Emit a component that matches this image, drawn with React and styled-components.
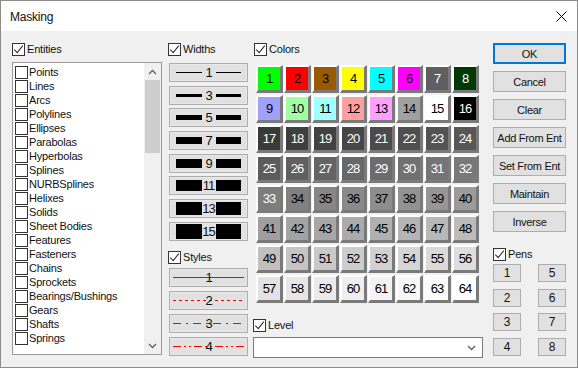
import React from "react";
import styled, { createGlobalStyle } from "styled-components";

const entities = [
	"Points", "Lines", "Arcs", "Polylines", "Ellipses", "Parabolas", "Hyperbolas",
	"Splines", "NURBSplines", "Helixes", "Solids", "Sheet Bodies", "Features",
	"Fasteners", "Chains", "Sprockets", "Bearings/Bushings", "Gears", "Shafts", "Springs",
];

const widths = [1, 3, 5, 7, 9, 11, 13, 15];

const styles = [
	{ n: 1, dash: "none" },
	{ n: 2, dash: "3 3" },
	{ n: 3, dash: "8 5 2 5" },
	{ n: 4, dash: "8 3 2 3 2 3" },
];

const topColors = [
	["#00ff00", "#000"], ["#ff0000", "#000"], ["#9c5a00", "#000"], ["#ffff00", "#000"],
	["#00ffff", "#000"], ["#ff00ff", "#000"], ["#5f5f5f", "#fff"], ["#003a00", "#fff"],
	["#a0a0ff", "#000"], ["#a0ffa0", "#000"], ["#a0ffff", "#000"], ["#ffa0a0", "#000"],
	["#ffa0ff", "#000"], ["#a0a0a0", "#000"], ["#ffffff", "#000"], ["#000000", "#fff"],
];

function cellColor(n) {
	if (n <= 16) return topColors[n - 1];
	const v = Math.min(255, Math.round(58 + (n - 17) * 4.2));
	const hex = v.toString(16).padStart(2, "0");
	return [`#${hex}${hex}${hex}`, n <= 33 ? "#fff" : "#000"];
}

const actions = ["OK", "Cancel", "Clear", "Add From Ent", "Set From Ent", "Maintain", "Inverse"];
const pens = [1, 5, 2, 6, 3, 7, 4, 8];

function CheckBox({ checked }) {
	return (
		<Box>
			{checked && (
				<svg width="11" height="11" viewBox="0 0 11 11">
					<path d="M1.3 5.6 L4.2 8.6 L9.8 1.6" fill="none" stroke="#333" strokeWidth="1.1" />
				</svg>
			)}
		</Box>
	);
}

function Chevron({ up }) {
	return (
		<svg width="9" height="6" viewBox="0 0 9 6">
			<path
				d={up ? "M1 5 L4.5 1.5 L8 5" : "M1 1 L4.5 4.5 L8 1"}
				fill="none"
				stroke="#606060"
				strokeWidth="1.3"
			/>
		</svg>
	);
}

function App() {
	return (
		<>
			<GlobalStyle />
			<Window>
				<TitleBar>
					<Title>Masking</Title>
					<svg width="11" height="11" viewBox="0 0 11 11">
						<path d="M0.5 0.5 L10.5 10.5 M10.5 0.5 L0.5 10.5" stroke="#000" strokeWidth="1" />
					</svg>
				</TitleBar>
				<Body>
					<Column $width={150}>
						<Header>
							<CheckBox checked />
							<span>Entities</span>
						</Header>
						<ListBox>
							<Items>
								{entities.map((e) => (
									<Item key={e}>
										<CheckBox />
										<span>{e}</span>
									</Item>
								))}
							</Items>
							<ScrollBar>
								<ArrowBox>
									<Chevron up />
								</ArrowBox>
								<Track>
									<Thumb />
								</Track>
								<ArrowBox>
									<Chevron />
								</ArrowBox>
							</ScrollBar>
						</ListBox>
					</Column>

					<Column $width={81} $ml={6}>
						<Header>
							<CheckBox checked />
							<span>Widths</span>
						</Header>
						<ButtonStack $top={5} $gap={3.7} $height={178}>
							{widths.map((w) => (
								<LineButton key={w}>
									<Bar $h={w} />
									<Num>{w}</Num>
									<Bar $h={w} />
								</LineButton>
							))}
						</ButtonStack>
						<Header $top={7}>
							<CheckBox checked />
							<span>Styles</span>
						</Header>
						<ButtonStack $top={2} $gap={4}>
							{styles.map((s) => (
								<StyleButton key={s.n}>
									<StyleLine width="71" height="3" viewBox="0 0 71 3">
										<line
											x1="0"
											y1="1.5"
											x2="71"
											y2="1.5"
											stroke="#ff0000"
											strokeWidth="1"
											strokeDasharray={s.dash}
										/>
									</StyleLine>
									<Num>{s.n}</Num>
								</StyleButton>
							))}
						</ButtonStack>
					</Column>

					<Column $width={232} $ml={4}>
						<Header $left={1}>
							<CheckBox checked />
							<span>Colors</span>
						</Header>
						<ColorGrid>
							{Array.from({ length: 64 }, (_, i) => {
								const [bg, fg] = cellColor(i + 1);
								return (
									<Cell key={i} $bg={bg} $fg={fg}>
										{i + 1}
									</Cell>
								);
							})}
						</ColorGrid>
						<Header $top={13}>
							<CheckBox checked />
							<span>Level</span>
						</Header>
						<Dropdown>
							<Chevron />
						</Dropdown>
					</Column>

					<Column $width={73} $ml={8}>
						<ActionStack>
							{actions.map((a, i) => (
								<ActionButton key={a} $primary={i === 0}>
									{a}
								</ActionButton>
							))}
						</ActionStack>
						<Header $top={13}>
							<CheckBox checked />
							<span>Pens</span>
						</Header>
						<PenGrid>
							{pens.map((p) => (
								<PenButton key={p}>{p}</PenButton>
							))}
						</PenGrid>
					</Column>
				</Body>
			</Window>
		</>
	);
}

export default App;

const GlobalStyle = createGlobalStyle`
	html, body {
		margin: 0;
		padding: 0;
		background: #f0f0f0;
	}
	#root {
		width: 578px;
		height: 368px;
	}
`;

const Window = styled.div`
	width: 578px;
	height: 368px;
	box-sizing: border-box;
	border: 1px solid #8c8c8c;
	background: #f0f0f0;
	font-family: "Liberation Sans", Arial, sans-serif;
	font-size: 11px;
	color: #111;
	display: flex;
	flex-direction: column;
	overflow: hidden;
`;

const TitleBar = styled.div`
	height: 30px;
	flex: none;
	background: #fff;
	display: flex;
	align-items: center;
	justify-content: space-between;
	padding: 0 10px 0 9px;
`;

const Title = styled.span`
	font-size: 12px;
	letter-spacing: -0.2px;
	padding-top: 1px;
`;

const Body = styled.div`
	display: flex;
	padding: 9px 0 0 11px;
`;

const Column = styled.div`
	width: ${(p) => p.$width}px;
	margin-left: ${(p) => p.$ml || 0}px;
	display: flex;
	flex-direction: column;
	flex: none;
`;

const Header = styled.label`
	height: 18px;
	display: flex;
	align-items: center;
	gap: 2px;
	margin-top: ${(p) => p.$top || 0}px;
	padding-left: ${(p) => p.$left || 0}px;
	letter-spacing: -0.2px;
`;

const Box = styled.span`
	width: 13px;
	height: 13px;
	box-sizing: border-box;
	border: 1px solid #333;
	background: #fff;
	display: flex;
	align-items: center;
	justify-content: center;
	flex: none;
`;

const ListBox = styled.div`
	margin-top: 4px;
	height: 293px;
	box-sizing: border-box;
	border: 1px solid #9a9a9a;
	background: #fff;
	display: flex;
`;

const Items = styled.div`
	flex: 1;
	padding: 3px 0 0 2px;
	display: flex;
	flex-direction: column;
`;

const Item = styled.div`
	height: 14px;
	display: flex;
	align-items: flex-start;
	gap: 1px;
	letter-spacing: -0.2px;
	line-height: 13px;
`;

const ScrollBar = styled.div`
	width: 17px;
	background: #f0f0f0;
	display: flex;
	flex-direction: column;
`;

const ArrowBox = styled.div`
	height: 17px;
	display: flex;
	align-items: center;
	justify-content: center;
`;

const Track = styled.div`
	flex: 1;
`;

const Thumb = styled.div`
	height: 73px;
	margin: 0 1px;
	background: #cdcdcd;
`;

const ButtonStack = styled.div`
	margin-top: ${(p) => p.$top}px;
	margin-left: 1px;
	display: flex;
	flex-direction: column;
	gap: ${(p) => p.$gap}px;
	height: ${(p) => (p.$height ? `${p.$height}px` : "auto")};
	flex: none;
`;

const LineButton = styled.div`
	width: 79px;
	height: 19px;
	box-sizing: border-box;
	border: 1px solid #adadad;
	background: #e1e1e1;
	box-shadow: inset 0 0 0 1px #e8e8e8;
	display: flex;
	align-items: center;
	padding: 0 6px;
	flex: none;
`;

const Bar = styled.span`
	flex: 1;
	height: ${(p) => p.$h}px;
	background: #000;
`;

const Num = styled.span`
	position: relative;
	width: 14px;
	text-align: center;
	font-size: 13px;
	letter-spacing: -1px;
	line-height: 1;
`;

const StyleButton = styled(LineButton)`
	position: relative;
	justify-content: center;
	padding: 0;
`;

const StyleLine = styled.svg`
	position: absolute;
	left: 3px;
	top: 7px;
`;

const ColorGrid = styled.div`
	margin: 7px 0 0 3px;
	display: grid;
	grid-template-columns: repeat(8, 27px);
	grid-auto-rows: 28px;
	column-gap: 1px;
	row-gap: 2px;
`;

const Cell = styled.div`
	box-sizing: border-box;
	border-style: solid;
	border-width: 2px 3px 3px 2px;
	border-color: #fff #7a7a7a #7a7a7a #fff;
	background: ${(p) => p.$bg};
	color: ${(p) => p.$fg};
	display: flex;
	align-items: center;
	justify-content: center;
	font-size: 13px;
	letter-spacing: -1px;
`;

const Dropdown = styled.div`
	margin-top: 3px;
	width: 230px;
	height: 21px;
	box-sizing: border-box;
	border: 1px solid #7a7a7a;
	background: #fff;
	display: flex;
	align-items: center;
	justify-content: flex-end;
	padding-right: 6px;
`;

const ActionStack = styled.div`
	margin-top: 3px;
	display: flex;
	flex-direction: column;
	gap: 7px;
`;

const ActionButton = styled.div`
	width: 73px;
	height: 21px;
	box-sizing: border-box;
	border: ${(p) => (p.$primary ? "2px solid #0078d7" : "1px solid #adadad")};
	background: #e1e1e1;
	display: flex;
	align-items: center;
	justify-content: center;
	letter-spacing: -0.3px;
	white-space: nowrap;
`;

const PenGrid = styled.div`
	margin-top: 1px;
	display: grid;
	grid-template-columns: repeat(2, 28px);
	grid-auto-rows: 18px;
	column-gap: 17px;
	row-gap: 6.7px;
`;

const PenButton = styled.div`
	box-sizing: border-box;
	border: 1px solid #adadad;
	background: #e1e1e1;
	display: flex;
	align-items: center;
	justify-content: center;
	font-size: 12px;
`;
